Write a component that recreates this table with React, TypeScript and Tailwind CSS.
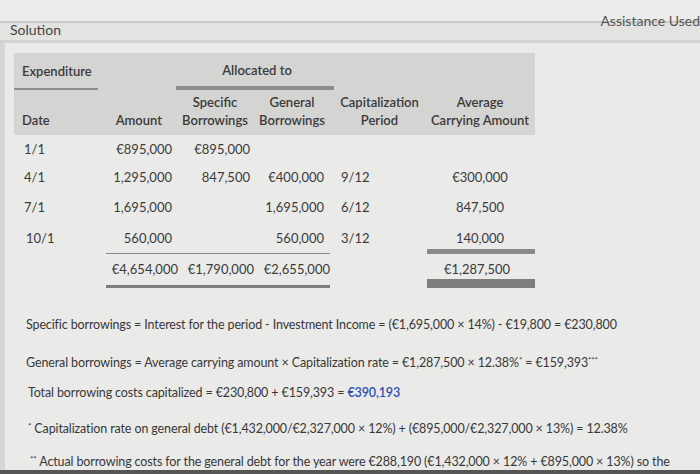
import React from 'react';

const font = { fontFamily: 'Lato, "Open Sans", sans-serif' };

const rows = [
  { date: '1/1', amount: '€895,000', spec: '€895,000', gen: '', period: '', avg: '', h: 'h-[30px]', dpad: 'pl-[10px]' },
  { date: '4/1', amount: '1,295,000', spec: '847,500', gen: '€400,000', period: '9/12', avg: '€300,000', h: 'h-[26px]', dpad: 'pl-[10px]' },
  { date: '7/1', amount: '1,695,000', spec: '', gen: '1,695,000', period: '6/12', avg: '847,500', h: 'h-[34px]', dpad: 'pl-[10px]' },
  { date: '10/1', amount: '560,000', spec: '', gen: '560,000', period: '3/12', avg: '140,000', h: 'h-[28px]', dpad: 'pl-[12px]' },
];

export default function App() {
  return (
    <div style={font} className="w-[700px] h-[474px] overflow-hidden bg-[#eaeae8] text-[#3b3b3b] flex flex-col">
      {/* top strips */}
      <div className="relative">
        <div className="h-[21px] bg-[#ececea]" />
        <div className="h-[2px] bg-[#c9c9c7]" />
        <div className="h-[17px] bg-[#e3e3e1] flex items-center">
          <div className="pl-[10px] text-[14px] leading-[16px] text-[#444] -mt-[3px]">Solution</div>
        </div>
        <div className="h-[3px] bg-[#d2d2d0]" />
        <div className="absolute right-0 top-[13px] text-[14px] leading-[16px] text-[#555] whitespace-nowrap">Assistance Used</div>
      </div>

      <div className="flex-1 flex">
        <div className="w-[5px] bg-[#d6d6d4]" />
        <div className="flex-1 flex flex-col pl-[9px] pt-[10px]">
          {/* table */}
          <div className="w-[521px] text-[13px]">
            <div className="bg-[#d4d4d2] font-semibold text-[#3a3a3a]">
              <div className="h-[35px] flex items-center">
                <div className="w-[162px] h-full flex flex-col justify-center">
                  <div className="pl-[8px] pt-[2px]">Expenditure</div>
                </div>
                <div className="w-[158px] text-center pl-[4px]">Allocated to</div>
              </div>
              <div className="flex h-[2px]">
                <div className="w-[84px] bg-[#8e8e8c]" />
                <div className="w-[78px]" />
                <div className="w-[158px] bg-[#8e8e8c] -mt-[2px]" />
              </div>
              <div className="grid grid-cols-[86px_76px_78px_76px_95px_110px] h-[45px] items-end pb-[6px] leading-[18px]">
                <div className="pl-[8px]">Date</div>
                <div className="text-right pr-[14px]">Amount</div>
                <div className="text-center">Specific<br />Borrowings</div>
                <div className="text-center">General<br />Borrowings</div>
                <div className="text-center pl-[4px]">Capitalization<br />Period</div>
                <div className="text-center">Average<br />Carrying Amount</div>
              </div>
            </div>

            {rows.map((r) => (
              <div key={r.date} className={`grid grid-cols-[86px_76px_78px_76px_95px_110px] items-center ${r.h}`}>
                <div className={r.dpad}>{r.date}</div>
                <div className="text-right pr-[4px]">{r.amount}</div>
                <div className="text-right pr-[4px]">{r.spec}</div>
                <div className="text-right pr-[6px]">{r.gen}</div>
                <div className="pl-[11px]">{r.period}</div>
                <div className="text-center">{r.avg}</div>
              </div>
            ))}
            <div className="flex h-[1px]">
              <div className="w-[92px]" />
              <div className="w-[224px] bg-[#8a8a88]" />
              <div className="w-[97px]" />
              <div className="w-[108px] bg-[#8a8a88] -mt-[4px]" />
            </div>
            <div className="grid grid-cols-[86px_76px_78px_76px_95px_110px] items-center h-[31px]">
              <div />
              <div className="text-right -mr-[2px]">€4,654,000</div>
              <div className="text-right">€1,790,000</div>
              <div className="text-right">€2,655,000</div>
              <div />
              <div className="text-center -ml-[6px]">€1,287,500</div>
            </div>
            <div className="flex h-[3px]">
              <div className="w-[92px]" />
              <div className="w-[224px] bg-[#7e7e7c]" />
              <div className="w-[97px]" />
              <div className="w-[108px] bg-[#7e7e7c] -mt-[6px]" />
            </div>
          </div>

          {/* explanation */}
          <div className="flex flex-col text-[12.5px] tracking-[-0.01em] text-[#383838] pl-[12px] pt-[29px] leading-[16px] whitespace-nowrap">
            <p className="h-[38px]">Specific borrowings = Interest for the period - Investment Income = (€1,695,000 × 14%) - €19,800 = €230,800</p>
            <p className="h-[30px]">General borrowings = Average carrying amount × Capitalization rate = €1,287,500 × 12.38%<sup className="text-[8px]">*</sup> = €159,393<sup className="text-[8px]">***</sup></p>
            <p className="h-[36px] pl-[2px]">Total borrowing costs capitalized = €230,800 + €159,393 = <span className="text-[#2d4fae] font-semibold">€390,193</span></p>
            <p className="h-[33px] pl-[2px]"><sup className="text-[8px]">*</sup> Capitalization rate on general debt (€1,432,000/€2,327,000 × 12%) + (€895,000/€2,327,000 × 13%) = 12.38%</p>
            <p className="pl-[4px]"><sup className="text-[8px]">**</sup> Actual borrowing costs for the general debt for the year were €288,190 (€1,432,000 × 12% + €895,000 × 13%) so the</p>
          </div>
        </div>
      </div>
      <div className="h-[4px] bg-[#555553]" />
    </div>
  );
}
